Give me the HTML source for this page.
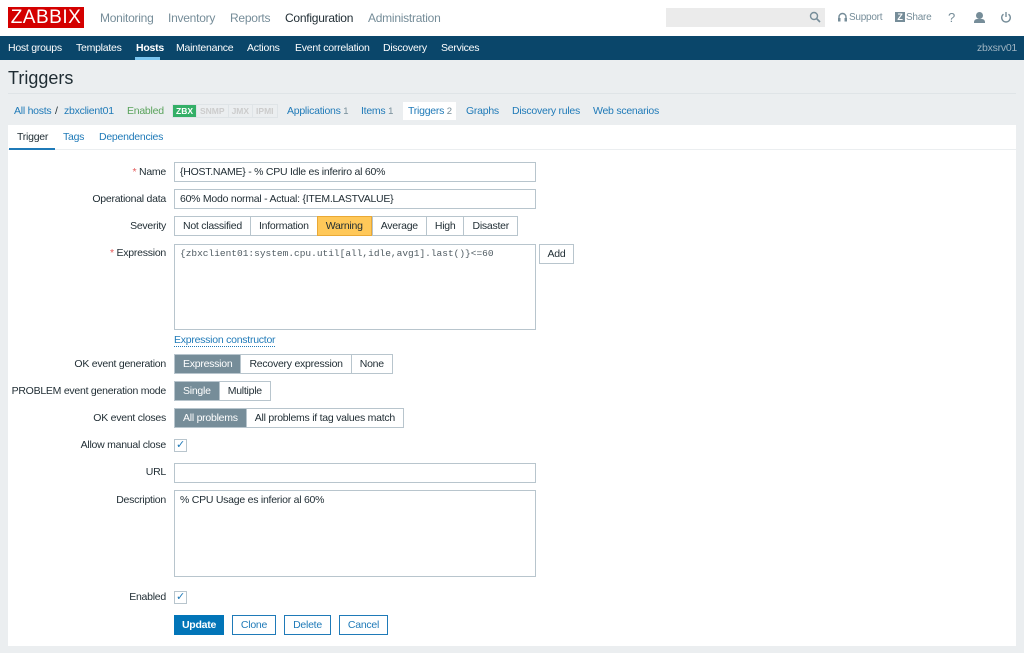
<!DOCTYPE html>
<html><head><meta charset="utf-8"><style>
*{box-sizing:border-box;margin:0;padding:0}
body{width:1024px;height:653px;background:#ebeef0;font-family:"Liberation Sans",sans-serif;font-size:10.5px;letter-spacing:-0.25px;color:#1f2c33;position:relative;overflow:hidden}
.a{position:absolute}
.top{left:0;top:0;width:1024px;height:36px;background:#fff}
.logo{left:8px;top:7px;width:76px;height:21px;background:#d40000;color:#fff;font-size:19px;line-height:21px;text-align:center;letter-spacing:.5px}
.mm{top:11px;font-size:12px;color:#768d99}
.nav{left:0;top:36px;width:1024px;height:24px;background:#0a466a}
.nav span{position:absolute;top:6px;color:#fff;font-size:10.5px}
.lnk{color:#1f7ab8}
.inp{position:absolute;background:#fff;border:1px solid #b8c5cd;height:20px;left:174px;width:362px;padding:3px 5px;font-size:10.5px}
.lbl{position:absolute;right:858px;font-size:10.5px;text-align:right;white-space:nowrap}
.seg{position:absolute;display:flex;height:20px;border:1px solid #b8c5cd}
.seg div{padding:0 8px;line-height:18px;font-size:10.5px;border-left:1px solid #b8c5cd;background:#fff}
.seg div:first-child{border-left:0}
.seg .on{background:#768d99;color:#fff}
.cb{position:absolute;left:174px;width:13px;height:13px;border:1px solid #b8c5cd;background:#fff;color:#1f7ab8;font-size:11px;line-height:11px;text-align:center}
.btn{position:absolute;top:615px;height:20px;border:1px solid #1f7ab8;color:#1f7ab8;background:#fff;font-size:10.5px;line-height:18px;text-align:center}
.t{position:absolute;top:105px;font-size:10.5px;white-space:nowrap}
</style></head><body>
<div class="a top"></div>
<div class="a logo">ZABBIX</div>
<div class="a mm" style="left:100px">Monitoring</div>
<div class="a mm" style="left:168px">Inventory</div>
<div class="a mm" style="left:230px">Reports</div>
<div class="a mm" style="left:285px;color:#1f2c33">Configuration</div>
<div class="a mm" style="left:368px">Administration</div>
<div class="a" style="left:666px;top:8px;width:159px;height:19px;background:#ebebeb"></div>
<svg class="a" style="left:809px;top:11px" width="12" height="12" viewBox="0 0 12 12"><circle cx="5" cy="5" r="3.5" fill="none" stroke="#768d99" stroke-width="1.4"/><path d="M7.5 7.5L11 11" stroke="#768d99" stroke-width="1.6"/></svg>
<svg class="a" style="left:837px;top:12px" width="11" height="11" viewBox="0 0 11 11"><path d="M2 7V5a3.5 3.5 0 0 1 7 0v2" fill="none" stroke="#768d99" stroke-width="1.4"/><rect x="1" y="6" width="2.5" height="3.5" fill="#768d99"/><rect x="7.5" y="6" width="2.5" height="3.5" fill="#768d99"/></svg>
<div class="a" style="left:849px;top:12px;font-size:10px;color:#768d99">Support</div>
<div class="a" style="left:895px;top:12px;width:10px;height:10px;background:#768d99;color:#fff;font-size:9px;line-height:10px;text-align:center;font-weight:bold">Z</div>
<div class="a" style="left:906px;top:12px;font-size:10px;color:#768d99">Share</div>
<div class="a" style="left:948px;top:10px;font-size:13px;color:#768d99">?</div>
<div class="a" style="left:976px;top:12px;width:7px;height:7px;border-radius:50%;background:#768d99"></div>
<div class="a" style="left:974px;top:19px;width:11px;height:4px;background:#768d99;border-radius:3px 3px 0 0"></div>
<svg class="a" style="left:1000px;top:11px" width="12" height="12" viewBox="0 0 12 12"><path d="M3.5 3.2A4.3 4.3 0 1 0 8.5 3.2" fill="none" stroke="#768d99" stroke-width="1.4"/><path d="M6 1v5" stroke="#768d99" stroke-width="1.4"/></svg>
<div class="a nav">
<span style="left:8px">Host groups</span><span style="left:76px">Templates</span>
<span style="left:136px;font-weight:bold">Hosts</span>
<span style="left:176px">Maintenance</span><span style="left:247px">Actions</span><span style="left:295px">Event correlation</span><span style="left:383px">Discovery</span><span style="left:441px">Services</span>
<span style="left:977px;color:#9fb4c2">zbxsrv01</span>
</div>
<div class="a" style="left:135px;top:57px;width:25px;height:3px;background:#7bc6f0"></div>
<div class="a" style="left:315px;top:31px;width:0;height:0;border:5px solid transparent;border-bottom-color:#0a466a"></div>
<div class="a" style="left:8px;top:68px;font-size:18px;letter-spacing:0">Triggers</div>
<div class="a" style="left:8px;top:93px;width:1008px;height:1px;background:#dfe4e7"></div>
<div class="t lnk" style="left:14px">All hosts</div>
<div class="t" style="left:55px">/</div>
<div class="t lnk" style="left:64px">zbxclient01</div>
<div class="t" style="left:127px;color:#59a25b">Enabled</div>
<div class="a" style="left:172px;top:104px;height:14px;display:flex;font-size:8.5px;font-weight:bold;line-height:12px;border:1px solid #dfe4e7;letter-spacing:0">
<span style="background:#34af67;color:#fff;padding:0 3px">ZBX</span><span style="color:#ccc;padding:0 3px;border-left:1px solid #dfe4e7">SNMP</span><span style="color:#ccc;padding:0 3px;border-left:1px solid #dfe4e7">JMX</span><span style="color:#ccc;padding:0 3px;border-left:1px solid #dfe4e7">IPMI</span></div>
<div class="t lnk" style="left:287px">Applications <span style="color:#768d99;font-size:9.5px">1</span></div>
<div class="t lnk" style="left:361px">Items <span style="color:#768d99;font-size:9.5px">1</span></div>
<div class="a" style="left:403px;top:102px;width:53px;height:18px;background:#fff"></div>
<div class="t lnk" style="left:408px">Triggers <span style="color:#768d99;font-size:9.5px">2</span></div>
<div class="t lnk" style="left:466px">Graphs</div>
<div class="t lnk" style="left:512px">Discovery rules</div>
<div class="t lnk" style="left:593px">Web scenarios</div>
<div class="a" style="left:8px;top:125px;width:1008px;height:521px;background:#fff"></div>
<div class="a" style="left:8px;top:149px;width:1008px;height:1px;background:#ebeef0"></div>
<div class="a" style="left:17px;top:131px">Trigger</div>
<div class="a" style="left:9px;top:148px;width:46px;height:2px;background:#1f7ab8"></div>
<div class="a lnk" style="left:63px;top:131px">Tags</div>
<div class="a lnk" style="left:99px;top:131px">Dependencies</div>

<div class="lbl" style="top:166px"><span style="color:#e45959">*</span> Name</div>
<div class="inp" style="top:162px">{HOST.NAME} - % CPU Idle es inferiro al 60%</div>
<div class="lbl" style="top:193px">Operational data</div>
<div class="inp" style="top:189px">60% Modo normal - Actual: {ITEM.LASTVALUE}</div>
<div class="lbl" style="top:220px">Severity</div>
<div class="seg" style="left:174px;top:216px"><div>Not classified</div><div>Information</div><div style="background:#ffc859;border:1px solid #e9a936;margin:-1px 0">Warning</div><div>Average</div><div>High</div><div>Disaster</div></div>
<div class="lbl" style="top:247px"><span style="color:#e45959">*</span> Expression</div>
<div class="inp" style="top:244px;height:86px;font-family:'Liberation Mono',monospace;font-size:9.5px;letter-spacing:0;color:#4f5b62">{zbxclient01:system.cpu.util[all,idle,avg1].last()}&lt;=60</div>
<div class="btn" style="left:539px;top:244px;width:35px;border-color:#b8c5cd;color:#1f2c33">Add</div>
<div class="a lnk" style="left:174px;top:334px;border-bottom:1px dotted #1f7ab8">Expression constructor</div>
<div class="lbl" style="top:358px">OK event generation</div>
<div class="seg" style="left:174px;top:354px"><div class="on">Expression</div><div>Recovery expression</div><div>None</div></div>
<div class="lbl" style="top:385px">PROBLEM event generation mode</div>
<div class="seg" style="left:174px;top:381px"><div class="on">Single</div><div>Multiple</div></div>
<div class="lbl" style="top:412px">OK event closes</div>
<div class="seg" style="left:174px;top:408px"><div class="on">All problems</div><div>All problems if tag values match</div></div>
<div class="lbl" style="top:439px">Allow manual close</div>
<div class="cb" style="top:439px">&#10003;</div>
<div class="lbl" style="top:466px">URL</div>
<div class="inp" style="top:463px"></div>
<div class="lbl" style="top:494px">Description</div>
<div class="inp" style="top:490px;height:87px">% CPU Usage es inferior al 60%</div>
<div class="lbl" style="top:591px">Enabled</div>
<div class="cb" style="top:591px">&#10003;</div>
<div class="btn" style="left:174px;width:50px;background:#0275b8;color:#fff;border-color:#0275b8;font-weight:bold">Update</div>
<div class="btn" style="left:232px;width:44px">Clone</div>
<div class="btn" style="left:284px;width:47px">Delete</div>
<div class="btn" style="left:339px;width:49px">Cancel</div>
</body></html>
